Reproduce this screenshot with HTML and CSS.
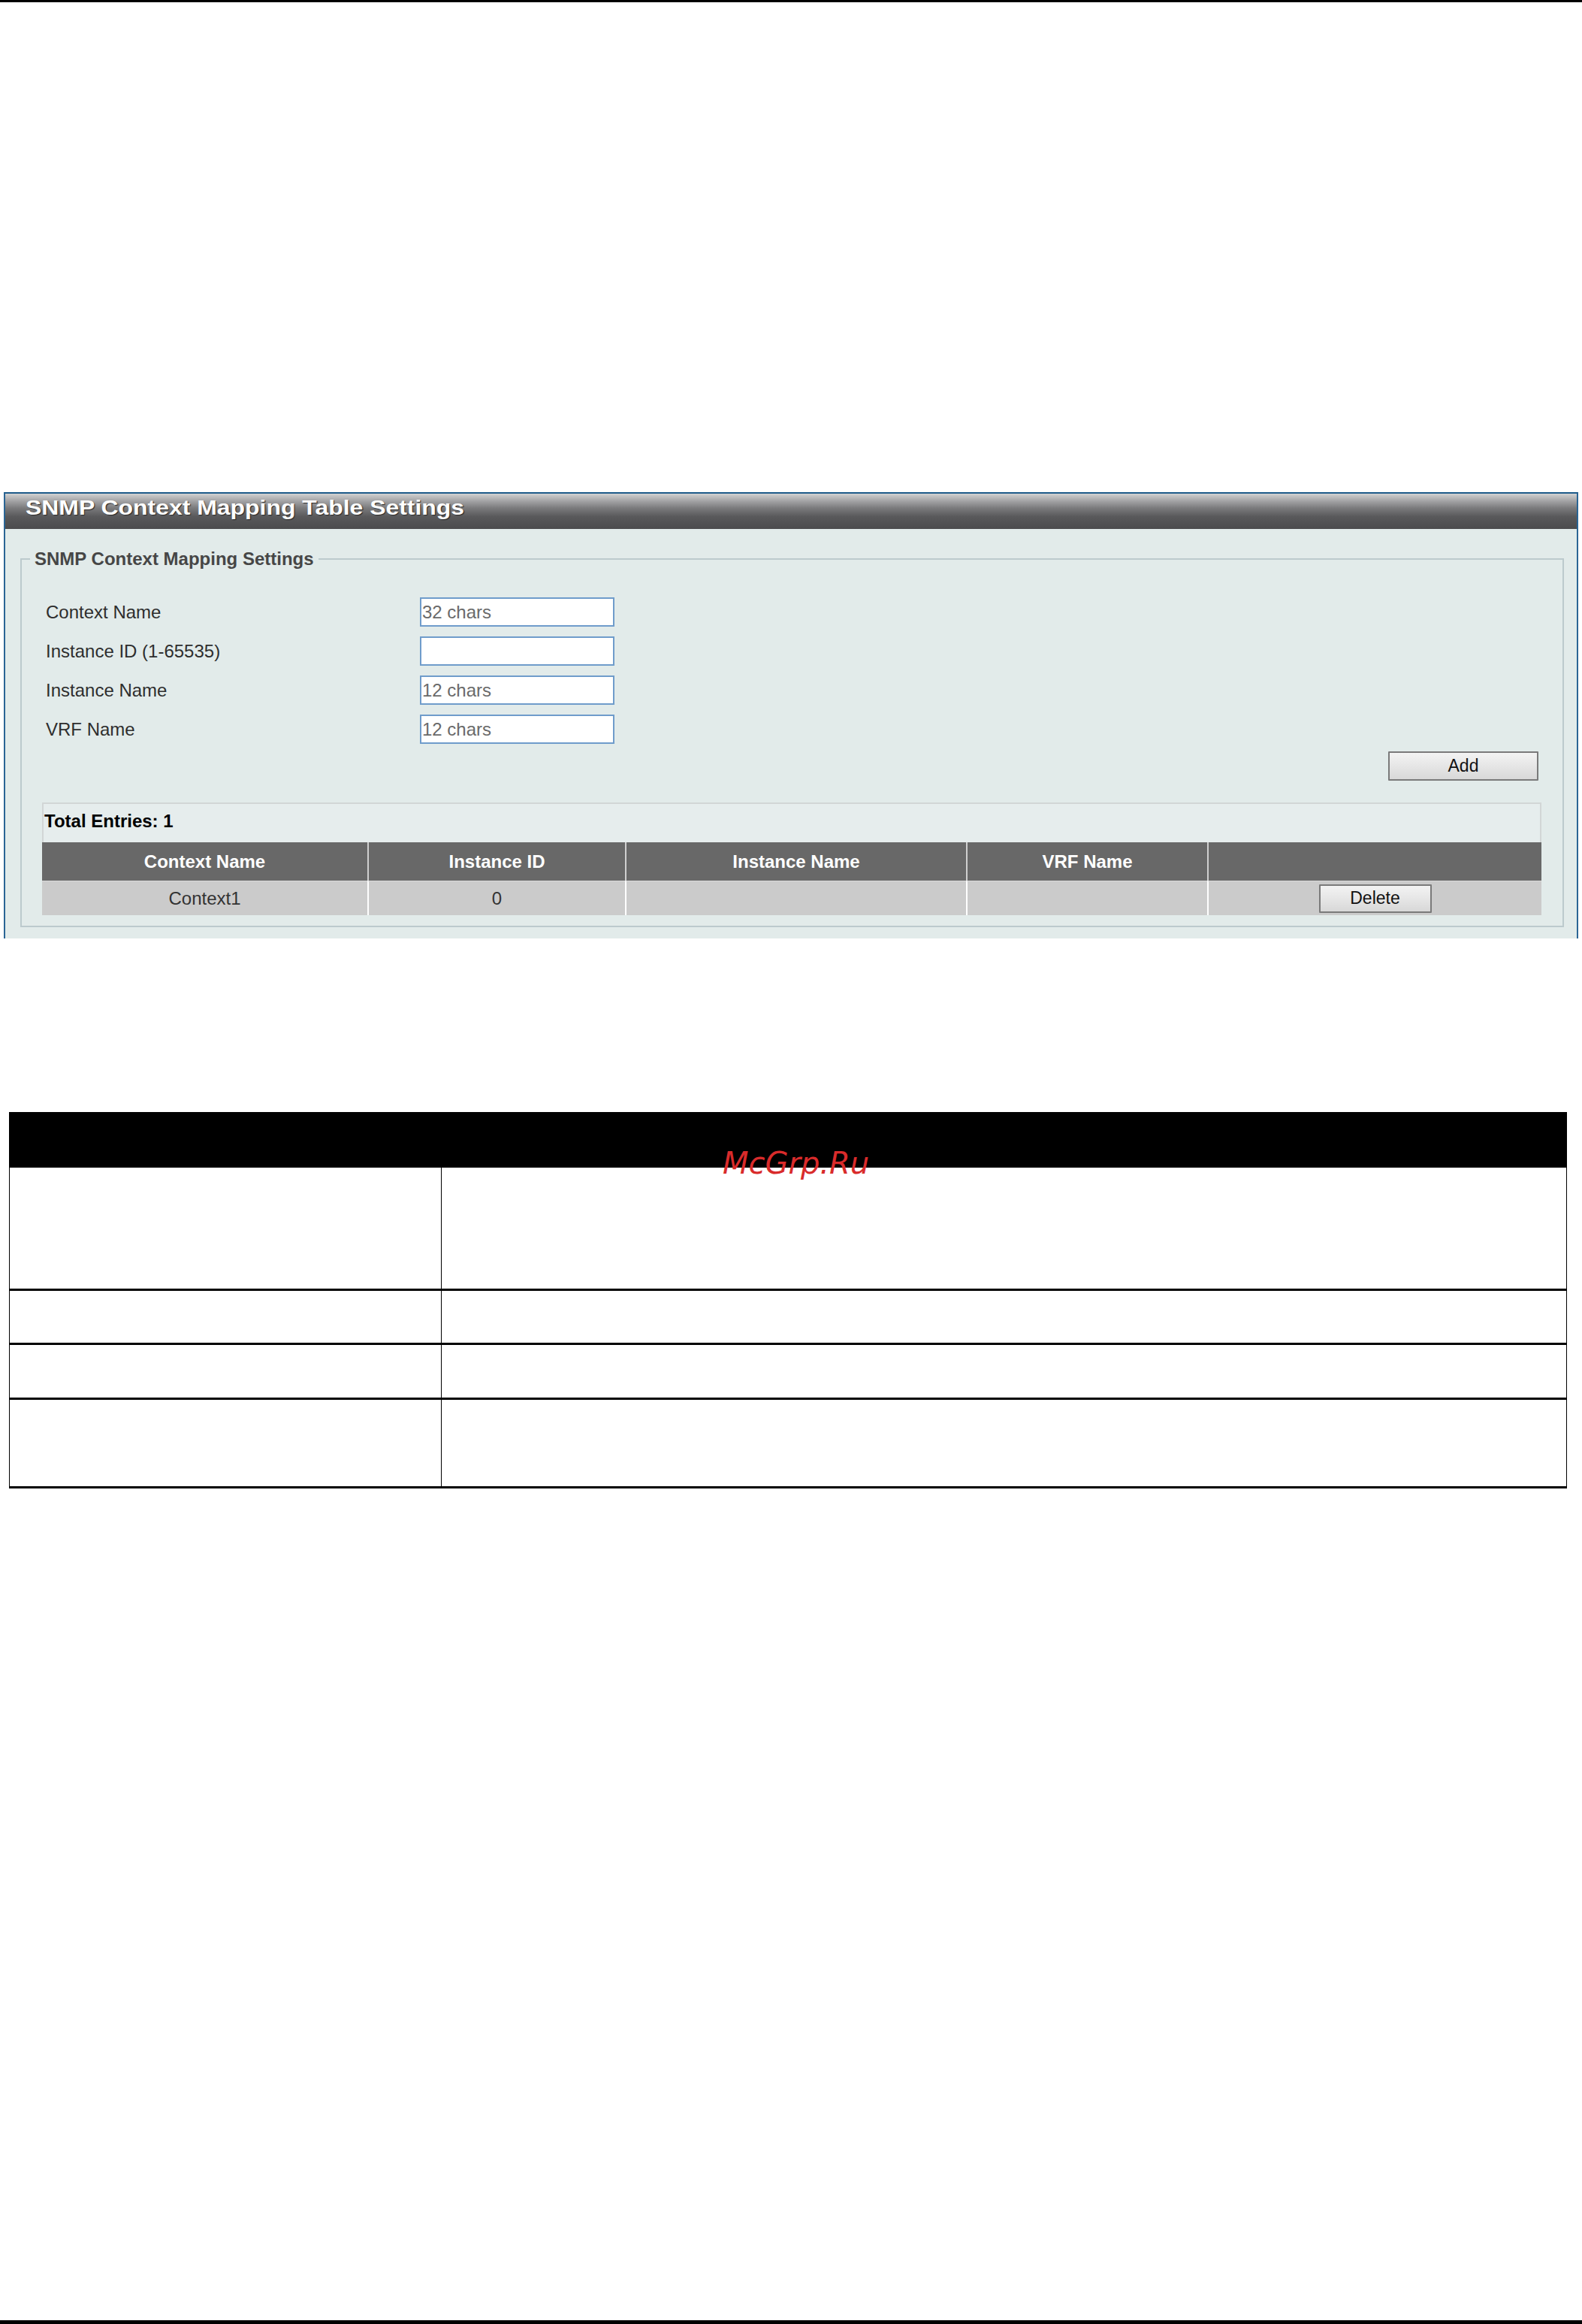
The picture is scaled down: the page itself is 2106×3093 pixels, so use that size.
FILE: index.html
```html
<!DOCTYPE html>
<html lang="en">
<head>
<meta charset="utf-8">
<title>SNMP Context Mapping Table Settings</title>
<link rel="stylesheet" href="styles.css">
</head>
<body>
<div class="page">
  <div class="rule-top"></div>

  <section class="panel">
    <div class="panel-title"><span class="title-text">SNMP Context Mapping Table Settings</span></div>
    <div class="panel-body">
      <fieldset class="group">
        <legend class="group-legend">SNMP Context Mapping Settings</legend>
        <div class="group-inner">
          <div class="form-grid">
            <label class="field-label">Context Name</label>
            <input class="field-input" type="text" placeholder="32 chars">
            <label class="field-label">Instance ID (1-65535)</label>
            <input class="field-input" type="text">
            <label class="field-label">Instance Name</label>
            <input class="field-input" type="text" placeholder="12 chars">
            <label class="field-label">VRF Name</label>
            <input class="field-input" type="text" placeholder="12 chars">
          </div>
          <div class="add-row"><button class="btn btn-add" type="button">Add</button></div>

          <div class="entries">
            <div class="entries-total">Total Entries: 1</div>
            <div class="grid-table">
              <div class="th">Context Name</div>
              <div class="th">Instance ID</div>
              <div class="th">Instance Name</div>
              <div class="th">VRF Name</div>
              <div class="th"></div>
              <div class="td">Context1</div>
              <div class="td">0</div>
              <div class="td"></div>
              <div class="td"></div>
              <div class="td"><button class="btn btn-delete" type="button">Delete</button></div>
            </div>
          </div>
        </div>
      </fieldset>
    </div>
  </section>

  <div class="doc-table">
    <div class="doc-head"></div>
    <div class="doc-cell doc-key row-a"></div>
    <div class="doc-cell doc-val row-a"></div>
    <div class="doc-cell doc-key row-b"></div>
    <div class="doc-cell doc-val row-b"></div>
    <div class="doc-cell doc-key row-c"></div>
    <div class="doc-cell doc-val row-c"></div>
    <div class="doc-cell doc-key row-d"></div>
    <div class="doc-cell doc-val row-d"></div>
    <div class="watermark">McGrp.Ru</div>
  </div>

  <div class="rule-bottom"></div>
</div>
</body>
</html>
```

FILE: styles.css
```css
html, body {
  margin: 0;
  padding: 0;
  background: #ffffff;
}

.page {
  height: 3093px;
  display: flex;
  flex-direction: column;
  font-family: "Liberation Sans", Arial, sans-serif;
  overflow: hidden;
}

.rule-top {
  height: 3px;
  background: #000;
  flex: none;
}

.rule-bottom {
  height: 5px;
  background: #000;
  margin-top: auto;
  flex: none;
}

/* ---------- panel ---------- */
.panel {
  margin: 652px 5px 0 5px;
  border-top: 2px solid #1d5a89;
  border-left: 2px solid #2a6595;
  border-right: 2px solid #2a6595;
  flex: none;
}

.panel-title {
  height: 47px;
  line-height: 38px;
  padding-left: 27px;
  background: linear-gradient(to bottom, #d2d2d2 0%, #a9a9ab 18%, #7c7c7e 40%, #59595b 65%, #4b4b4d 100%);
  color: #ffffff;
  font-weight: bold;
  font-size: 28px;
  white-space: nowrap;
  overflow: hidden;
}

.title-text {
  display: inline-block;
  transform: scaleX(1.14);
  transform-origin: left center;
  text-shadow: 1px 1px 1px #2a2a2a;
}

.panel-body {
  background: #e2ebea;
  padding: 26px 17px 15px 20px;
}

.group {
  margin: 0;
  padding: 0;
  border: 2px solid #bccacd;
  min-width: 0;
}

.group-legend {
  margin-left: 11px;
  padding: 0 6px;
  font-size: 24px;
  line-height: 28px;
  font-weight: bold;
  color: #464646;
}

.group-inner {
  padding: 37px 28px 14px 27px;
}

.form-grid {
  display: grid;
  grid-template-columns: 498px 259px;
  grid-auto-rows: 39px;
  row-gap: 13px;
  align-items: center;
  padding-left: 5px;
}

.field-label {
  font-size: 24px;
  color: #2e2e2e;
}

.field-input {
  box-sizing: border-box;
  width: 259px;
  height: 39px;
  margin: 0;
  padding: 0 0 0 1px;
  border: 2px solid #6f9ccb;
  border-radius: 0;
  background: #ffffff;
  font-family: "Liberation Sans", Arial, sans-serif;
  font-size: 24px;
  color: #333;
  outline: none;
}

.field-input::placeholder {
  color: #6a6a6a;
  opacity: 1;
}

.add-row {
  margin-top: 10px;
  display: flex;
  justify-content: flex-end;
  padding-right: 4px;
}

.btn {
  box-sizing: border-box;
  margin: 0;
  padding: 0;
  border: 2px solid #7a7a7a;
  border-radius: 1px;
  background: linear-gradient(to bottom, #f3f3f3 0%, #e6e6e6 50%, #d8d8d8 100%);
  font-family: "Liberation Sans", Arial, sans-serif;
  font-size: 23px;
  color: #111;
}

.btn-add {
  width: 200px;
  height: 39px;
}

.btn-delete {
  width: 150px;
  height: 38px;
}

/* ---------- entries table ---------- */
.entries {
  margin-top: 29px;
  border: 2px solid #d2d6d6;
  border-bottom: none;
  background: #e6eded;
}

.entries-total {
  height: 51px;
  line-height: 46px;
  padding-left: 1px;
  font-size: 24px;
  font-weight: bold;
  color: #000;
}

.grid-table {
  display: grid;
  grid-template-columns: 433px 343px 454px 321px 1fr;
  margin: 0 -2px;
}

.th {
  height: 51px;
  display: flex;
  align-items: center;
  justify-content: center;
  background: #686868;
  color: #ffffff;
  font-weight: bold;
  font-size: 24px;
}

.th + .th {
  border-left: 2px solid #cfcfcf;
}

.td {
  height: 46px;
  display: flex;
  align-items: center;
  justify-content: center;
  background: #cbcbcb;
  color: #333333;
  font-size: 24px;
  border-left: 2px solid #ffffff;
  border-top: 1px solid #d8d8d8;
  box-sizing: border-box;
}

.td:nth-child(6) {
  border-left: none;
}

/* ---------- document table ---------- */
.doc-table {
  position: relative;
  margin: 231px 20px 0 12px;
  border-left: 1px solid #000;
  border-right: 1px solid #000;
  display: grid;
  grid-template-columns: 575px 1fr;
  flex: none;
}

.doc-head {
  grid-column: 1 / 3;
  height: 74px;
  background: #000;
}

.doc-cell {
  border-bottom: 3px solid #000;
}

.doc-key {
  border-right: 1px solid #000;
}

.row-a { height: 161px; }
.row-b { height: 69px; }
.row-c { height: 70px; }
.row-d { height: 115px; }

.watermark {
  position: absolute;
  left: 949px;
  top: 48px;
  font-family: "DejaVu Sans", sans-serif;
  font-style: italic;
  font-size: 40px;
  line-height: 40px;
  color: #d92b2b;
  white-space: nowrap;
}
```
